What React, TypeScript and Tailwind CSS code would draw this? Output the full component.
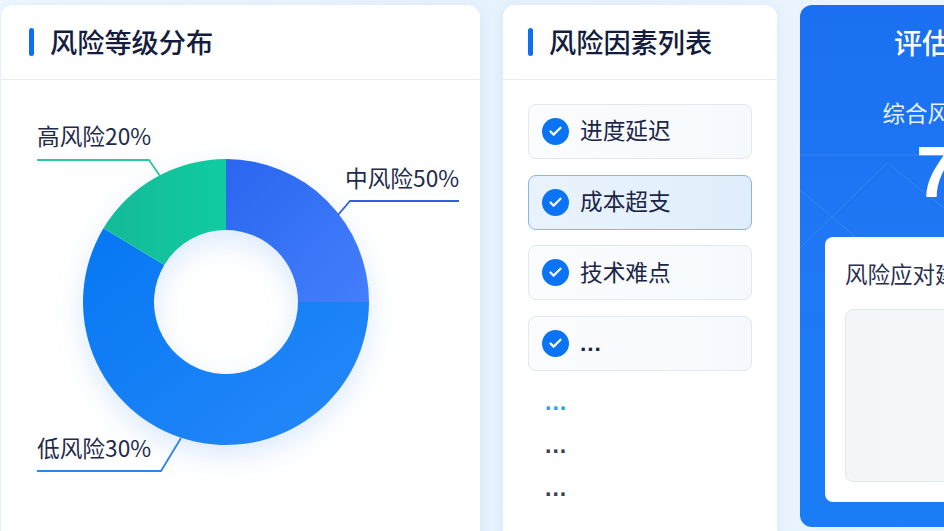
import { Check } from "lucide-react";

const factors = ["进度延迟", "成本超支", "技术难点", "..."];

function polar(r: number, deg: number) {
  const a = (deg * Math.PI) / 180;
  return [226 + r * Math.sin(a), 302 - r * Math.cos(a)];
}

// donut segment, angles clockwise from twelve o'clock
function arc(from: number, to: number) {
  const [x1, y1] = polar(143, from);
  const [x2, y2] = polar(143, to);
  const [x3, y3] = polar(72, to);
  const [x4, y4] = polar(72, from);
  const large = to - from > 180 ? 1 : 0;
  return `M${x1} ${y1}A143 143 0 ${large} 1 ${x2} ${y2}L${x3} ${y3}A72 72 0 ${large} 0 ${x4} ${y4}Z`;
}

function CardTitle({ children, inset }: { children: string; inset: string }) {
  return (
    <div className={`flex h-[75px] shrink-0 items-center gap-4 border-b border-[#e8edf4] pb-[1px] ${inset}`}>
      <span className="h-[28px] w-[5px] rounded-full bg-[#0b6ff2]" />
      <h2 className="text-[27.2px] font-medium leading-none text-[#141d3d]">{children}</h2>
    </div>
  );
}

function Donut() {
  return (
    <div className="relative flex-1">
      <svg width="479" height="451" viewBox="1 80 479 451" className="block">
        <defs>
          <linearGradient id="seg-mid" x1="0" y1="0" x2="1" y2="1">
            <stop offset="0" stopColor="#2a66ef" />
            <stop offset="1" stopColor="#437ffb" />
          </linearGradient>
          <linearGradient id="seg-low" x1="0" y1="0" x2="1" y2="1">
            <stop offset="0" stopColor="#0577f3" />
            <stop offset="1" stopColor="#2689f9" />
          </linearGradient>
          <linearGradient id="seg-high" x1="0" y1="0" x2="1" y2="0">
            <stop offset="0" stopColor="#14ba97" />
            <stop offset="1" stopColor="#10cca1" />
          </linearGradient>
        </defs>
        <g className="drop-shadow-[0_10px_14px_rgba(30,120,240,0.16)]">
          <path d={arc(90, 301)} fill="url(#seg-low)" />
          <path d={arc(0, 90)} fill="url(#seg-mid)" />
          <path d={arc(301, 360)} fill="url(#seg-high)" />
        </g>
        <g fill="none" strokeWidth="1.8">
          <path d="M37 160H149L160 176" stroke="#2cc69f" />
          <path d="M459 201H350L338 215" stroke="#2e62d8" />
          <path d="M37 471H161L181 438" stroke="#2a86ea" />
        </g>
      </svg>
      <span className="absolute left-[36px] top-[40px] text-[22.7px] leading-[32px] text-[#232b4a]">高风险20%</span>
      <span className="absolute left-[344px] top-[82px] text-[22.7px] leading-[32px] text-[#232b4a]">中风险50%</span>
      <span className="absolute left-[36px] top-[352px] text-[22.7px] leading-[32px] text-[#232b4a]">低风险30%</span>
    </div>
  );
}

function Dots({ color }: { color: string }) {
  return <span className={`block h-[43px] pl-[17px] font-['Liberation_Sans',sans-serif] text-[23px] font-bold leading-[32px] tracking-[1px] ${color}`}>...</span>;
}

export default function App() {
  return (
    <div className="h-[531px] w-[944px] overflow-hidden bg-gradient-to-r from-[#eef6fe] via-[#e6f2fd] to-[#eaf5fe] font-['Noto_Sans_CJK_SC','Noto_Sans',sans-serif]">
      <div className="flex w-[1100px] items-start gap-[23px] pl-px pt-[5px]">
        <section className="flex h-[540px] w-[479px] shrink-0 flex-col rounded-xl bg-white shadow-[0_2px_12px_rgba(60,130,220,0.10)]">
          <CardTitle inset="pl-[28px]">风险等级分布</CardTitle>
          <Donut />
        </section>

        <section className="flex h-[540px] w-[274px] shrink-0 flex-col rounded-xl bg-white shadow-[0_2px_12px_rgba(60,130,220,0.10)]">
          <CardTitle inset="pl-[25px]">风险因素列表</CardTitle>
          <div className="flex flex-col gap-[15.7px] px-[25px] pt-[24px]">
            {factors.map((name, i) => (
              <div
                key={name}
                className={`flex h-[55px] items-center gap-[11px] rounded-lg border pl-[13px] ${
                  i === 1
                    ? "border-[#8db4e6] bg-gradient-to-r from-[#e9f3fd] to-[#e0eefb]"
                    : "border-[#e3e7ee] bg-gradient-to-r from-[#fbfcfe] to-[#f5f9fd]"
                }`}
              >
                <span className="flex h-[27px] w-[27px] shrink-0 items-center justify-center rounded-full bg-[#0a74f4]">
                  <Check size={15} strokeWidth={3.5} color="#ffffff" />
                </span>
                <span className={`text-[22.7px] leading-none text-[#1b2547] ${name === "..." ? "font-['Liberation_Sans',sans-serif] font-bold tracking-[1px]" : "-mt-[2px]"}`}>{name}</span>
              </div>
            ))}
          </div>
          <div className="px-[25px] pt-[15px]">
            <Dots color="text-[#27a3ea]" />
            <Dots color="text-[#3a4056]" />
            <Dots color="text-[#3a4056]" />
          </div>
        </section>

        <section className="relative flex h-[522px] w-[300px] shrink-0 flex-col overflow-hidden rounded-xl bg-gradient-to-b from-[#1a70f0] via-[#2078f5] to-[#1a7df6]">
          <svg className="absolute left-0 top-[130px]" width="300" height="120" fill="none" stroke="#ffffff" strokeOpacity="0.1">
            <path d="M0 20H300M0 55L70 114M0 113L87 28L150 78M150 78L230 18" />
          </svg>
          <h2 className="relative pt-[18px] text-center text-[28px] font-medium leading-[38px] text-white">评估结果</h2>
          <p className="relative pt-[35px] text-center text-[22.5px] leading-[32px] text-[#e6f0ff]">综合风险评分</p>
          <p className="relative pl-3 pt-[6px] text-center font-['Liberation_Sans',sans-serif] text-[72px] font-bold leading-[76px] text-white">75</p>
          <div className="relative mx-[25px] mt-[27px] flex h-[265px] flex-col rounded-lg bg-white px-5 pt-[20px]">
            <h3 className="text-[22.5px] leading-[32px] text-[#2a3150]">风险应对建议</h3>
            <div className="mt-[20px] h-[173px] rounded-lg border border-[#e3e6eb] bg-gradient-to-r from-[#f3f5f8] to-[#f5f9fd]" />
          </div>
        </section>
      </div>
    </div>
  );
}
